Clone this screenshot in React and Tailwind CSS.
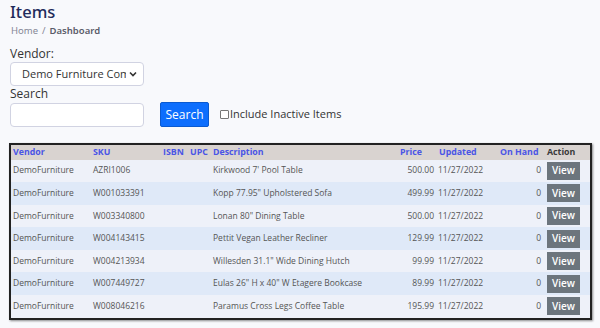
import React from "react";

const rows = [
  ["DemoFurniture", "AZRI1006", "Kirkwood 7' Pool Table", "500.00"],
  ["DemoFurniture", "W001033391", 'Kopp 77.95" Upholstered Sofa', "499.99"],
  ["DemoFurniture", "W003340800", 'Lonan 80" Dining Table', "500.00"],
  ["DemoFurniture", "W004143415", "Pettit Vegan Leather Recliner", "129.99"],
  ["DemoFurniture", "W004213934", 'Willesden 31.1" Wide Dining Hutch', "99.99"],
  ["DemoFurniture", "W007449727", 'Eulas 26" H x 40" W Etagere Bookcase', "89.99"],
  ["DemoFurniture", "W008046216", "Paramus Cross Legs Coffee Table", "195.99"],
];

const cols = "grid grid-cols-[80px_70px_27px_23px_183px_42px_64px_43px_47px]";

export default function App() {
  return (
    <div className="w-[600px] h-[328px] bg-[#f8f9fc] overflow-hidden font-['Open_Sans',sans-serif] text-[#212529]">
      <div className="pl-[10px] pt-[1px]">
        <h1 className="text-[16.5px] leading-[22px] text-[#1f2b5b] font-medium font-['Noto_Sans',sans-serif]">Items</h1>
        <div className="text-[9.5px] leading-[13px] mt-[1px] font-['Noto_Sans',sans-serif] pl-[1px]">
          <span className="text-[#858796]">Home</span>
          <span className="text-[#858796] mx-[4px]">/</span>
          <span className="text-[#5a5c69] font-semibold">Dashboard</span>
        </div>
        <div className="text-[12px] leading-[16px] mt-[9px] text-[#333]">Vendor:</div>
        <div className="w-[134px] h-[24px] bg-white border border-[#d1d3e2] rounded-[4px] flex items-center pl-[11px] pr-[6px] text-[11px] text-[#333] overflow-hidden">
          <span className="whitespace-nowrap overflow-hidden flex-1">Demo Furniture Company</span>
          <svg width="8" height="6" viewBox="0 0 8 6" className="ml-[3px] shrink-0">
            <path d="M1 1.5 L4 4.5 L7 1.5" stroke="#333" strokeWidth="1.6" fill="none" />
          </svg>
        </div>
        <div className="text-[12px] leading-[16px] text-[#333]">Search</div>
        <div className="flex items-center">
          <div className="w-[134px] h-[24px] bg-white border border-[#d1d3e2] rounded-[4px]" />
          <button className="ml-[16px] w-[49px] h-[25px] bg-[#0d6efd] text-white text-[12px] rounded-[2px] border border-[#0a5ad0]">Search</button>
          <label className="ml-[11px] flex items-center text-[11px] text-[#333]">
            <span className="w-[9px] h-[9px] border border-[#767676] rounded-[1px] bg-white mr-[1px]" />
            Include Inactive Items
          </label>
        </div>
      </div>
      <div className="ml-[9px] mt-[16px] w-[583px] border-2 border-[#222] shadow-[1px_1px_2px_rgba(0,0,0,0.45)] text-[8.5px] text-[#555]">
        <div className={`${cols} h-[14.5px] items-center bg-[#d9d3d0] font-bold text-[8.8px] text-[#4a55e6] whitespace-nowrap`}>
          <div className="pl-[2px]">Vendor</div>
          <div className="pl-[2px]">SKU</div>
          <div className="pl-[2px]">ISBN</div>
          <div className="pl-[2px]">UPC</div>
          <div className="pl-[2px]">Description</div>
          <div className="pl-[6px]">Price</div>
          <div className="pl-[3px]">Updated</div>
          <div className="pl-[0px]">On Hand</div>
          <div className="pl-[4px] text-[#3a3a3a]">Action</div>
        </div>
        {rows.map((r, i) => (
          <div key={i} className={`${cols} h-[22.6px] items-center ${i % 2 === 0 ? "bg-[#eef1f9]" : "bg-[#dfe9f8]"}`}>
            <div className="pl-[2px] whitespace-nowrap">{r[0]}</div>
            <div className="pl-[2px] whitespace-nowrap">{r[1]}</div>
            <div />
            <div />
            <div className="pl-[2px] whitespace-nowrap overflow-hidden">{r[2]}</div>
            <div className="text-right pr-[2px]">{r[3]}</div>
            <div className="pl-[2px]">11/27/2022</div>
            <div className="text-right pr-[2px]">0</div>
            <div className="pl-[4px]">
              <button className="w-[33px] h-[18px] bg-[#6c757d] text-white text-[10px] font-semibold">View</button>
            </div>
          </div>
        ))}
      </div>
    </div>
  );
}
